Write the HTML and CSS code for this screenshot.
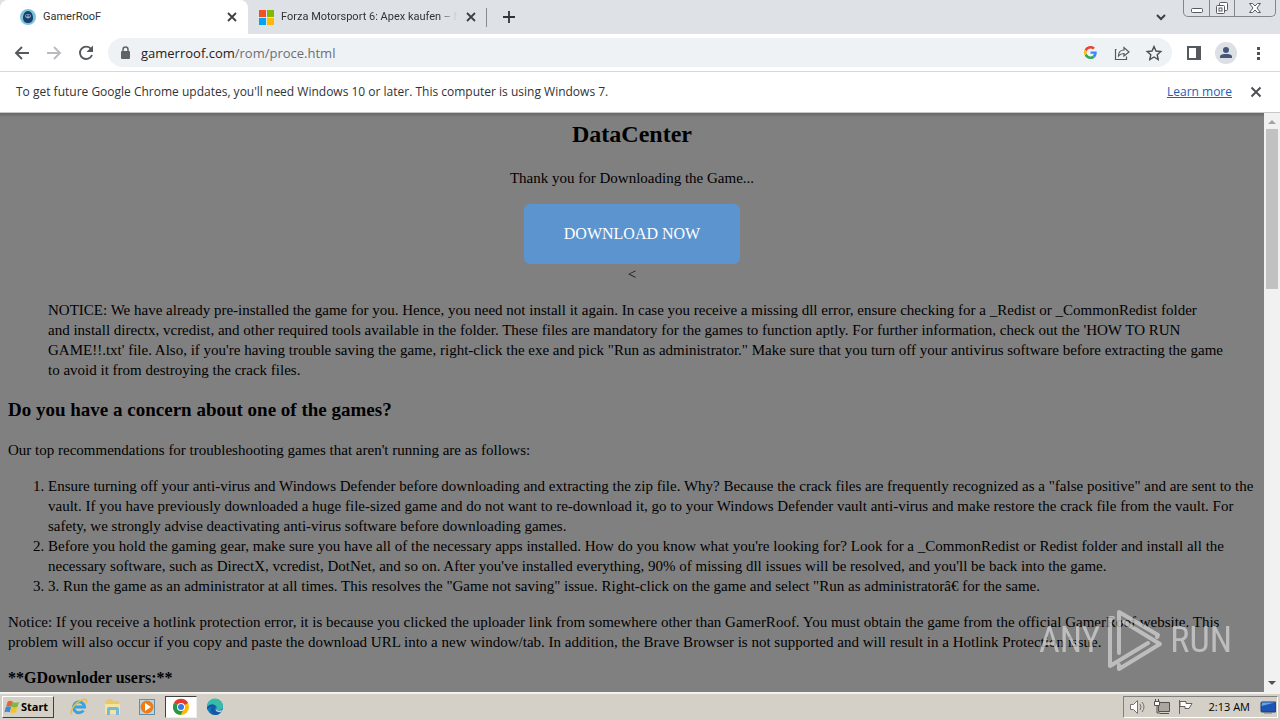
FILE: index.html
```html
<!DOCTYPE html>
<html lang="en">
<head>
<meta charset="utf-8">
<title>GamerRooF</title>
<link rel="stylesheet" href="styles.css">
</head>
<body>
<div class="screen">
  <header class="tabstrip">
    <div class="tab tab-active">
      <svg class="favicon" viewBox="0 0 16 16"><circle cx="8" cy="8" r="8" fill="#7cc4dc"/><path d="M8 2c3 0 5 3 5 7 0 3-2 5-5 5s-5-2-5-5c0-4 2-7 5-7z" fill="#17406d"/><ellipse cx="8" cy="7" rx="3" ry="2" fill="#7f9fc0"/><circle cx="6.800" cy="6.800" r=".8" fill="#102f50"/><circle cx="9.200" cy="6.800" r=".8" fill="#102f50"/><path d="M7 8h2l-1 2z" fill="#e9b787"/></svg>
      <span class="tab-title">GamerRooF</span>
      <button class="icon-button small" aria-label="Close tab"><svg width="16" height="16" viewBox="0 0 16 16"><path d="M4 4l8 8M12 4l-8 8" stroke="#3c4043" stroke-width="1.800"/></svg></button>
    </div>
    <div class="tab tab-second">
      <svg class="favicon" viewBox="0 0 16 16"><path fill="#f25022" d="M1 1h7v7H1z"/><path fill="#7fba00" d="M9 1h7v7H9z"/><path fill="#00a4ef" d="M1 9h7v7H1z"/><path fill="#ffb900" d="M9 9h7v7H9z"/></svg>
      <span class="tab-title faded">Forza Motorsport 6: Apex kaufen – M</span>
      <button class="icon-button small" aria-label="Close tab"><svg width="16" height="16" viewBox="0 0 16 16"><path d="M4 4l8 8M12 4l-8 8" stroke="#3c4043" stroke-width="1.800"/></svg></button>
    </div>
    <button class="icon-button new-tab" aria-label="New tab"><svg width="16" height="16" viewBox="0 0 16 16"><path d="M8 2v12M2 8h12" stroke="#303338" stroke-width="1.800"/></svg></button>
    <button class="icon-button tab-search" aria-label="Search tabs"><svg width="16" height="16" viewBox="0 0 16 16"><path d="M4 6l4 4 4-4" fill="none" stroke="#3c4043" stroke-width="2"/></svg></button>
    <div class="window-buttons">
      <button class="minimize" aria-label="Minimize"><svg width="14" height="16" viewBox="0 0 14 16"><rect x="1.500" y="8.500" width="11" height="4" rx="1" fill="#fff" stroke="#555a66"/></svg></button>
      <button class="restore" aria-label="Restore"><svg width="14" height="16" viewBox="0 0 14 16"><rect x="4.500" y="2.500" width="8" height="8" rx="1" fill="#fff" stroke="#555a66"/><rect x="1.500" y="5.500" width="8" height="8" rx="1" fill="#fff" stroke="#555a66"/><rect x="4" y="8" width="3" height="3" fill="#fff" stroke="#555a66"/></svg></button>
      <button class="close" aria-label="Close"><svg width="14" height="16" viewBox="0 0 14 16"><path d="M1.500 3.500h3L7 6l2.500-2.500h3L9 8l3.500 4.500h-3L7 10l-2.500 2.500h-3L5 8z" fill="#fff" stroke="#555a66"/></svg></button>
    </div>
  </header>

  <nav class="toolbar">
    <button class="icon-button" aria-label="Back"><svg width="20" height="20" viewBox="0 0 20 20"><path d="M17 10H4M10 4l-6 6 6 6" fill="none" stroke="#55585c" stroke-width="1.900"/></svg></button>
    <button class="icon-button" aria-label="Forward"><svg width="20" height="20" viewBox="0 0 20 20"><path d="M3 10h13M10 4l6 6-6 6" fill="none" stroke="#b9bbbe" stroke-width="1.900"/></svg></button>
    <button class="icon-button" aria-label="Reload"><svg width="20" height="20" viewBox="0 0 20 20"><path d="M15.200 6.200A6.200 6.200 0 1 0 16 12" fill="none" stroke="#55585c" stroke-width="1.900"/><path d="M17 2.500V9h-6.500z" fill="#55585c"/></svg></button>
    <div class="omnibox">
      <svg width="16" height="16" viewBox="0 0 16 16"><rect x="4" y="6" width="9" height="8" rx="1" fill="#5f6368"/><path d="M6 6.500V4.500a2.500 2.500 0 0 1 5 0v2" fill="none" stroke="#5f6368" stroke-width="1.500"/></svg>
      <a class="url" href="#">gamerroof.com<span class="url-path">/rom/proce.html</span></a>
      <button class="icon-button" aria-label="Search with Google"><svg width="13" height="13" viewBox="0 0 48 48"><path fill="#ea4335" d="M24 9.500c3.500 0 6.700 1.200 9.200 3.600l6.900-6.900C35.900 2.400 30.500 0 24 0 14.600 0 6.500 5.400 2.600 13.200l8 6.200C12.400 13.700 17.700 9.500 24 9.500z"/><path fill="#4285f4" d="M47 24.600c0-1.600-.2-3.100-.4-4.600H24v9h12.900c-.6 3-2.200 5.500-4.700 7.200l7.700 6C44.400 38 47 32 47 24.600z"/><path fill="#fbbc05" d="M10.500 28.600a14.500 14.500 0 0 1 0-9.200l-7.900-6.200a24 24 0 0 0 0 21.600z"/><path fill="#34a853" d="M24 48c6.500 0 11.900-2.100 15.900-5.800l-7.700-6c-2.200 1.500-4.900 2.300-8.200 2.300-6.300 0-11.600-4.200-13.500-9.900l-7.900 6.200C6.500 42.600 14.600 48 24 48z"/></svg></button>
      <button class="icon-button" aria-label="Share"><svg width="18" height="18" viewBox="0 0 18 18"><path d="M3.500 5.500h-1v10h11v-3M5.500 12c0-4 2.500-6 5.500-6V3.500l5 4.500-5 4V9.500c-2.500 0-4 .5-5.500 2.500z" fill="none" stroke="#55585c" stroke-width="1.200"/></svg></button>
      <button class="icon-button" aria-label="Bookmark"><svg width="18" height="18" viewBox="0 0 18 18"><path d="M9 2.500l2 4.500 4.800.5-3.600 3.200 1 4.800L9 13l-4.200 2.500 1-4.800-3.600-3.200L7 7z" fill="none" stroke="#4b4e52" stroke-width="1.400"/></svg></button>
    </div>
    <button class="icon-button side" aria-label="Side panel"><svg width="16" height="16" viewBox="0 0 16 16"><path d="M1 1h14v14H1zM3 3v10h7V3z" fill="#55585c" fill-rule="evenodd"/></svg></button>
    <button class="icon-button avatar" aria-label="Profile"><svg width="22" height="22" viewBox="0 0 22 22"><circle cx="11" cy="11" r="11" fill="#dcdfe4"/><circle cx="11" cy="8" r="3" fill="#46557a"/><path d="M5 16v-1.500C5 12.500 8.500 12 11 12s6 .5 6 2.500V16z" fill="#46557a"/></svg></button>
    <button class="icon-button menu" aria-label="Menu"><svg width="16" height="16" viewBox="0 0 16 16"><path d="M7 2h3v3H7zM7 7h3v3H7zM7 12h3v3H7z" fill="#505357"/></svg></button>
  </nav>

  <div class="infobar">
    <p>To get future Google Chrome updates, you'll need Windows 10 or later. This computer is using Windows 7.</p>
    <a href="#">Learn more</a>
    <button class="icon-button small" aria-label="Dismiss"><svg width="16" height="16" viewBox="0 0 16 16"><path d="M3.500 3.500l9 9M12.500 3.500l-9 9" stroke="#4b4e52" stroke-width="1.900"/></svg></button>
  </div>

  <div class="viewport">
    <main class="page">
      <div class="intro">
        <h2>DataCenter</h2>
        <p>Thank you for Downloading the Game...</p>
        <a class="download" href="#">DOWNLOAD NOW</a>
        <div>&lt;</div>
      </div>
      <blockquote>NOTICE: We have already pre-installed the game for you. Hence, you need not install it again. In case you receive a missing dll error, ensure checking for a _Redist or _CommonRedist folder<br>and install directx, vcredist, and other required tools available in the folder. These files are mandatory for the games to function aptly. For further information, check out the 'HOW TO RUN<br>GAME!!.txt' file. Also, if you're having trouble saving the game, right-click the exe and pick "Run as administrator." Make sure that you turn off your antivirus software before extracting the game<br>to avoid it from destroying the crack files.</blockquote>
      <h3>Do you have a concern about one of the games?</h3>
      <p>Our top recommendations for troubleshooting games that aren't running are as follows:</p>
      <ol>
        <li>Ensure turning off your anti-virus and Windows Defender before downloading and extracting the zip file. Why? Because the crack files are frequently recognized as a "false positive" and are sent to the<br>vault. If you have previously downloaded a huge file-sized game and do not want to re-download it, go to your Windows Defender vault anti-virus and make restore the crack file from the vault. For<br>safety, we strongly advise deactivating anti-virus software before downloading games.</li>
        <li>Before you hold the gaming gear, make sure you have all of the necessary apps installed. How do you know what you're looking for? Look for a _CommonRedist or Redist folder and install all the<br>necessary software, such as DirectX, vcredist, DotNet, and so on. After you've installed everything, 90% of missing dll issues will be resolved, and you'll be back into the game.</li>
        <li>3. Run the game as an administrator at all times. This resolves the "Game not saving" issue. Right-click on the game and select "Run as administratorâ€ for the same.</li>
      </ol>
      <p>Notice: If you receive a hotlink protection error, it is because you clicked the uploader link from somewhere other than GamerRoof. You must obtain the game from the official GamerRoof website. This<br>problem will also occur if you copy and paste the download URL into a new window/tab. In addition, the Brave Browser is not supported and will result in a Hotlink Protection issue.</p>
      <p class="users"><strong>**GDownloder users:**</strong></p>
    </main>
    <div class="scrollbar">
      <svg width="16" height="16" viewBox="0 0 16 16"><path d="M4 11l4-4 4 4z" fill="#a3a3a3"/></svg>
      <div class="thumb"></div>
      <svg width="16" height="16" viewBox="0 0 16 16"><path d="M4 5l4 4 4-4z" fill="#505050"/></svg>
    </div>
    <div class="watermark">
      <span>ANY</span>
      <svg width="56" height="64" viewBox="0 0 56 64" fill="none" stroke="currentColor" stroke-width="4" stroke-linejoin="round" stroke-linecap="round"><path d="M12 45V4l39 23-1 2M6 10H3v48l38-23M12 57v4l41-25-36-22"/></svg>
      <span>RUN</span>
    </div>
  </div>

  <footer class="taskbar">
    <button class="start"><svg width="16" height="16" viewBox="0 0 18 16"><path d="M4 2c2-1.500 4-1 6 0L8.500 7.500c-2-1-4-1-6 0z" fill="#e7652b"/><path d="M10 2.500c2 1 4 1 7 0L15 8c-2 1-4 1-6.500 0z" fill="#7cb843"/><path d="M2 8c2-1 4-1 6 0L6.500 14c-2-1-4-1-6 0z" fill="#3d8bd0"/><path d="M8.500 8c2 1 4 1 6.500 0l-1.500 6c-2 1-4 1-6.500 0z" fill="#f3c32c"/></svg>Start</button>
    <div class="launchers">
      <button aria-label="Internet Explorer"><svg width="20" height="20" viewBox="0 0 20 20"><path d="M14.500 13.500A5.500 5.500 0 1 1 15.500 10H6" fill="none" stroke="#39a3df" stroke-width="3"/><path d="M3 17C0 16 5 6 13 3c5-2 5 1 4 3" fill="none" stroke="#e8bd3e" stroke-width="1.500"/></svg></button>
      <button aria-label="Explorer"><svg width="20" height="20" viewBox="0 0 20 20"><path d="M3 4l2-2h4l1 2h6v12H3z" fill="#e8c86c"/><path d="M2 7h15v10H2z" fill="#f5e3a0"/><path d="M4 18v-6q0-2 2-2h8q2 0 2 2v6h-3v-5H7v5z" fill="#76b9d8"/></svg></button>
      <button aria-label="Media Player"><svg width="20" height="20" viewBox="0 0 20 20"><rect x="2.500" y="2.500" width="15" height="15" fill="#b6d7ea" stroke="#668da8"/><circle cx="10" cy="10" r="6.500" fill="#ee7d18"/><path d="M8 6l6 4-6 4z" fill="#fff"/></svg></button>
      <button class="running" aria-label="Chrome"><svg width="18" height="18" viewBox="0 0 18 18"><circle cx="9" cy="9" r="8" fill="#fbbc05"/><path d="M9 9L2 5a8 8 0 0 1 14 0z" fill="#e33b2e"/><path d="M9 9L2 5a8 8 0 0 0 6.500 12L12 11z" fill="#279847"/><circle cx="9" cy="9" r="4" fill="#fff"/><circle cx="9" cy="9" r="3" fill="#3779dc"/></svg></button>
      <button aria-label="Edge"><svg width="18" height="18" viewBox="0 0 18 18"><circle cx="9" cy="9" r="8" fill="#1477c4"/><path d="M1 9a8 8 0 0 1 16-1c0 3-2 4-5 4-2 0-2-1-1-2 0-3-5-5-10-1z" fill="#36bda8"/><path d="M1 9c4-4 8-3 9 0-2 0-3 5 5 5-2 3-6 4-9 2-2-2-2-5 0-7-2 0-4 1-5 3z" fill="#1259a4"/><path d="M11 10c-2 1 0 4 5 2l-1 2c-4 1-7-2-4-4z" fill="#d4d0c8"/></svg></button>
    </div>
    <div class="tray">
      <svg width="18" height="16" viewBox="0 0 18 16"><path d="M1.500 5.500h3l4-4v13l-4-4h-3z" fill="#fff" stroke="#77736c"/><path d="M11 5q2 3 0 6M13 3q4 5 0 10" fill="none" stroke="#77736c"/></svg>
      <svg width="18" height="16" viewBox="0 0 18 16"><path d="M5.500 3.500h11v9h-11zM7 14.500h9" fill="#aaa69f" stroke="#55524d"/><path d="M1.500 2.500h5v4h-5z" fill="#fff" stroke="#55524d"/><path d="M2.500 0v2M5.500 0v2M4 7v7h3" fill="none" stroke="#55524d"/></svg>
      <svg width="18" height="16" viewBox="0 0 18 16"><path d="M2.500 1v14M3 2.500h6v2h6l-3 5H8v-2H3z" fill="#fff" stroke="#66625c"/></svg>
      <time>2:13 AM</time>
      <svg width="16" height="16" viewBox="0 0 16 16"><rect x="1" y="3" width="15" height="10" rx="1" fill="#1d55b7" stroke="#233b66"/><path d="M1.500 7L15 3.500H2z" fill="#68a2e8"/><path d="M4 14h8" stroke="#777"/></svg>
    </div>
  </footer>
</div>
</body>
</html>
```
FILE: styles.css
```css
* { box-sizing: border-box; }
body { margin: 0; }
button { margin: 0; padding: 0; border: 0; background: none; font: inherit; color: inherit; }
svg { display: block; flex: none; }
.screen { display: flex; flex-direction: column; height: 100vh; overflow: hidden; font: 12px/16px "Open Sans", "Noto Sans", sans-serif; color: #303338; }
.tabstrip { display: flex; height: 34px; background: #dee1e6; flex: none; }
.tab { display: flex; align-items: center; height: 34px; font-family: Roboto, sans-serif; font-size: 11px; white-space: nowrap; }
.tab-active { width: 248px; padding: 0 8px 0 20px; background: #fff; border-radius: 8px 8px 0 0; }
.tab-second { width: 239px; padding: 0 8px 0 10px; position: relative; }
.tab-second::after { content: ""; position: absolute; right: 0; top: 8px; height: 19px; width: 1px; background: #85888d; }
.favicon { width: 16px; height: 16px; }
.tab-title { flex: 1; min-width: 0; margin-left: 7px; overflow: hidden; }
.faded { margin-right: 6px; mask-image: linear-gradient(to right, #000 90%, transparent); }
.icon-button { display: flex; align-items: center; justify-content: center; width: 32px; height: 32px; flex: none; }
.small { width: 16px; height: 16px; }
.new-tab { width: 44px; height: 34px; }
.tab-search { margin-left: auto; height: 34px; width: 40px; margin-right: 2px; }
.window-buttons { display: flex; width: 93px; height: 17px; margin-right: 4px; border: 1px solid #82868f; border-top: 0; border-radius: 0 0 5px 5px; }
.window-buttons button { display: flex; justify-content: center; align-items: center; width: 25px; }
.window-buttons button + button { border-left: 1px solid #82868f; }
.window-buttons .close { flex: 1; }
.toolbar { display: flex; align-items: center; height: 38px; padding: 0 6px; background: #fff; border-bottom: 1px solid #d6d8db; flex: none; }
.omnibox { display: flex; align-items: center; flex: 1; height: 29px; margin-left: 6px; padding: 0 2px 0 9px; background: #eff2f5; border-radius: 15px; }
.url { flex: 1; margin-left: 8px; font-size: 13px; line-height: 20px; color: #202124; text-decoration: none; }
.url-path { color: #6b6f74; }
.side { margin-left: 6px; }
.infobar { display: flex; align-items: center; height: 41px; padding: 0 16px; background: #fff; border-bottom: 1px solid #c8c8c8; flex: none; }
.infobar p { flex: 1; margin: 0; }
.infobar a { margin-right: 16px; color: #1762b5; }
.viewport { position: relative; display: flex; flex: 1; min-height: 0; background: linear-gradient(#666, #808080 4px); }
.page { flex: 1; min-width: 0; overflow: hidden; padding: 8px; font: 15px/20px "Liberation Serif", "Times New Roman", serif; color: #000; white-space: nowrap; }
.intro { text-align: center; }
.page h2 { margin: 0 0 20px; font-size: 24px; line-height: 27px; }
.page p { margin: 16px 0; }
.download { display: inline-block; padding: 20px 40px; background: #5b94ce; border-radius: 6px; color: #fff; font-size: 16px; text-decoration: none; vertical-align: top; }
.page blockquote { margin: 16px 40px; }
.page h3 { margin: 20px 0; font-size: 19px; line-height: 20px; }
.page ol { margin: 16px 0; padding-left: 40px; }
.page .users { font-size: 16px; }
.scrollbar { display: flex; flex-direction: column; width: 16px; background: #f1f1f1; flex: none; }
.thumb { height: 160px; margin: 0 2px auto; background: #c1c1c1; }
.watermark { position: absolute; right: 48px; bottom: 20px; display: flex; align-items: center; gap: 7px; font: 36px/64px "Liberation Sans Narrow", "Roboto Condensed", Roboto, sans-serif; color: #d8d8d8; opacity: .7; }
.taskbar { display: flex; align-items: center; height: 28px; padding: 2px; background: #d4d0c8; border-top: 2px solid #f4f2ee; flex: none; }
.start { display: flex; align-items: center; gap: 1px; width: 52px; height: 22px; padding-left: 1px; font: bold 11px/16px "Noto Sans", sans-serif; color: #000; border: 1px solid #fff; border-right-color: #404040; border-bottom-color: #404040; }
.launchers { display: flex; gap: 2px; margin-left: 9px; }
.launchers button { display: flex; align-items: center; justify-content: center; width: 32px; height: 22px; }
.launchers .running { background: #fff; border: 1px solid #404040; border-right-color: #eee; border-bottom-color: #eee; }
.tray { display: flex; align-items: center; gap: 6px; height: 22px; margin-left: auto; padding: 0 1px 0 5px; font-size: 11px; color: #000; border: 1px solid #808080; border-right-color: #fff; border-bottom-color: #fff; }
.tray time { margin: 0 4px 0 8px; }
```
